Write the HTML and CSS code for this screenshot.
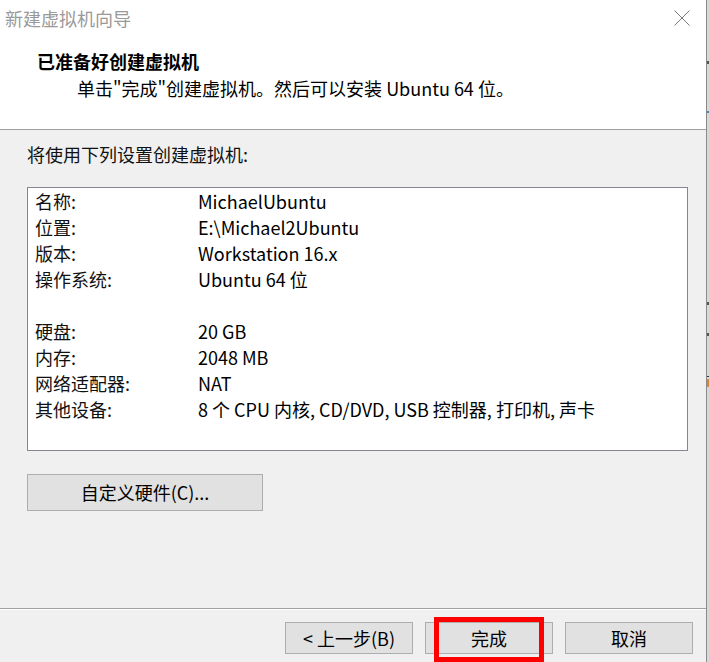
FILE: index.html
```html
<!DOCTYPE html>
<html lang="zh-CN">
<head>
<meta charset="utf-8">
<title>新建虚拟机向导</title>
<link rel="stylesheet" href="styles.css">
</head>
<body>
<div class="window">
  <div class="dialog">
    <div class="titlebar">
      <span class="title">新建虚拟机向导</span>
      <svg class="close" width="16" height="16" viewBox="0 0 16 16"><path d="M0.5 0.5 L15.5 15.5 M15.5 0.5 L0.5 15.5" stroke="#7a7a7a" stroke-width="1" fill="none"/></svg>
    </div>
    <div class="header">
      <div class="h-title">已准备好创建虚拟机</div>
      <div class="h-sub">单击"完成"创建虚拟机。然后可以安装 Ubuntu 64 位。</div>
    </div>
    <div class="body">
      <div class="intro">将使用下列设置创建虚拟机:</div>
      <div class="listbox">
        <div class="row"><span class="k">名称:</span><span class="v">MichaelUbuntu</span></div>
        <div class="row"><span class="k">位置:</span><span class="v">E:\Michael2Ubuntu</span></div>
        <div class="row"><span class="k">版本:</span><span class="v">Workstation 16.x</span></div>
        <div class="row"><span class="k">操作系统:</span><span class="v">Ubuntu 64 位</span></div>
        <div class="row"></div>
        <div class="row"><span class="k">硬盘:</span><span class="v">20 GB</span></div>
        <div class="row"><span class="k">内存:</span><span class="v">2048 MB</span></div>
        <div class="row"><span class="k">网络适配器:</span><span class="v">NAT</span></div>
        <div class="row"><span class="k">其他设备:</span><span class="v">8 个 CPU 内核, CD/DVD, USB 控制器, 打印机, 声卡</span></div>
      </div>
      <button class="btn custom">自定义硬件(C)...</button>
    </div>
    <div class="sep"></div>
    <div class="footer">
      <button class="btn">&lt; 上一步(B)</button>
      <div class="finish-wrap">
        <button class="btn">完成</button>
        <div class="highlight"></div>
      </div>
      <button class="btn">取消</button>
    </div>
  </div>
  <div class="strip"></div>
</div>
</body>
</html>
```
FILE: styles.css
```css
html, body {
  margin: 0;
  padding: 0;
  width: 709px;
  height: 662px;
  overflow: hidden;
  background: #f0f0f0;
  font-family: "Noto Sans CJK SC", "Noto Sans", sans-serif;
  font-size: 18px;
  color: #000;
}

.window {
  display: flex;
  height: 662px;
}

.dialog {
  width: 706px;
  border-right: 1px solid #8a8a8a;
  display: flex;
  flex-direction: column;
  background: #f0f0f0;
}

.strip {
  flex: 1;
  background:
    linear-gradient(#555, #555) 0 61px / 100% 3px no-repeat,
    linear-gradient(#3b8ec2, #3b8ec2) 0 111px / 100% 2px no-repeat,
    linear-gradient(#555, #555) 0 302px / 100% 3px no-repeat,
    linear-gradient(#555, #555) 0 333px / 100% 3px no-repeat,
    linear-gradient(#333, #333) 0 376px / 100% 1px no-repeat,
    linear-gradient(#d08a3a, #d08a3a) 0 379px / 100% 8px no-repeat,
    #d9d9d9;
}

.titlebar {
  height: 38px;
  background: #fff;
  display: flex;
  align-items: center;
  justify-content: space-between;
  padding: 0 16px 0 5px;
}

.title {
  color: #999;
  line-height: 36px;
  padding-bottom: 2px;
}

.close {
  display: block;
  margin-top: -2px;
}

.header {
  background: #fff;
  height: 81px;
  padding-top: 10px;
  border-bottom: 1px solid #a0a0a0;
}

.h-title {
  font-weight: 700;
  line-height: 26px;
  padding-left: 37px;
}

.h-sub {
  line-height: 26px;
  padding-left: 77px;
  margin-top: 1px;
}

.body {
  flex: 1;
  padding: 11px 18px 0 27px;
  display: flex;
  flex-direction: column;
  align-items: flex-start;
}

.intro {
  line-height: 26px;
  color: #111;
}

.listbox {
  align-self: stretch;
  margin-top: 20px;
  height: 262px;
  background: #fff;
  border: 1px solid #828790;
  padding: 0 0 0 7px;
  box-sizing: content-box;
}

.row {
  display: flex;
  height: 26px;
  line-height: 26px;
}

.k {
  width: 163px;
  flex: none;
  color: #111;
}

.btn {
  font-family: inherit;
  font-size: 18px;
  color: #000;
  background: #e1e1e1;
  border: 1px solid #adadad;
  padding: 0;
  margin: 0;
  width: 128px;
  height: 32px;
  line-height: 30px;
}

.custom {
  margin-top: 23px;
  width: 236px;
  height: 37px;
  line-height: 35px;
}

.sep {
  height: 0;
  border-top: 1px solid #a0a0a0;
  border-bottom: 1px solid #fff;
}

.footer {
  height: 52px;
  box-sizing: border-box;
  padding: 12px 13px 0 0;
  display: flex;
  justify-content: flex-end;
  align-items: flex-start;
  gap: 12px;
}

.finish-wrap {
  position: relative;
  width: 128px;
  height: 32px;
}

.highlight {
  position: absolute;
  left: 9px;
  right: 9px;
  top: -5px;
  height: 45px;
  border: 5px solid #ff0000;
  box-sizing: border-box;
}
```
